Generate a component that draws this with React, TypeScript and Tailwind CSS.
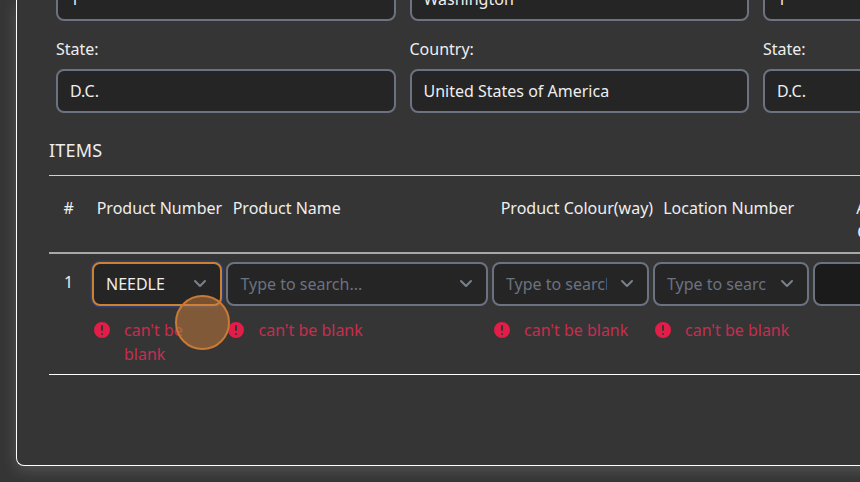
import React from "react";

function Field({ label, value }: { label?: string; value: string }) {
  return (
    <div className="w-[339.5px] shrink-0">
      {label && <div className="mb-2 h-6 leading-6">{label}</div>}
      <div className="flex h-11 items-center rounded-lg border-2 border-[#6b7280] bg-[#252525] px-3">
        {value}
      </div>
    </div>
  );
}

function Chevron() {
  return (
    <svg viewBox="0 0 20 20" className="h-5 w-5 shrink-0 text-[#7b818c]" fill="none" stroke="currentColor" strokeWidth="2" strokeLinecap="round" strokeLinejoin="round">
      <path d="M5 7l5 5 5-5" />
    </svg>
  );
}

function ErrorText() {
  return (
    <div className="mt-3 flex text-[#c52e50]">
      <svg viewBox="0 0 20 20" className="mt-[2px] mr-[12.4px] h-5 w-5 shrink-0">
        <path
          fill="#e11d48"
          fillRule="evenodd"
          d="M18 10a8 8 0 11-16 0 8 8 0 0116 0zm-7 4a1 1 0 11-2 0 1 1 0 012 0zm-1-9a1 1 0 00-1 1v4a1 1 0 102 0V6a1 1 0 00-1-1z"
        />
      </svg>
      <div className="leading-6">can't be blank</div>
    </div>
  );
}

function SearchCell({ width, value, active }: { width: string; value?: string; active?: boolean }) {
  return (
    <div className={`${width} shrink-0`}>
      <div
        className={`flex h-11 items-center rounded-lg border-2 bg-[#252525] pl-[12.4px] pr-[10px] ${
          active ? "border-[#cc8231] shadow-[0_0_0_1.5px_#303e70]" : "border-[#6b7280]"
        }`}
      >
        <div className={`mr-[10px] min-w-0 flex-1 overflow-hidden whitespace-nowrap ${value ? "text-[#eeeeee]" : "text-[#6b7280]"}`}>
          {value ?? "Type to search..."}
        </div>
        <Chevron />
      </div>
      <ErrorText />
    </div>
  );
}

export default function App() {
  return (
    <div className="relative h-[482px] w-[860px] overflow-hidden bg-[#353535] pl-4 font-['Noto_Sans',sans-serif] text-base text-[#eeeeee]">
      <div className="h-[466px] w-[900px] overflow-hidden rounded-bl-lg border-b border-l border-white bg-[#353535] pl-8 shadow-[0_4px_16px_rgba(255,255,255,0.16)]">
        <div className="-mt-[23px] flex gap-[14px] pl-[7px]">
          <Field value="1" />
          <Field value="Washington" />
          <Field value="1" />
        </div>
        <div className="mt-4 flex gap-[14px] pl-[7px]">
          <Field label="State:" value="D.C." />
          <Field label="Country:" value="United States of America" />
          <Field label="State:" value="D.C." />
        </div>
        <h2 className="mt-[23px] h-[39px] text-lg leading-7 tracking-[0.01em]">ITEMS</h2>
        <div className="flex h-[79px] items-start border-t border-b-2 border-t-[#d0d0d0] border-b-[#a8a8a8] pt-5 leading-6 whitespace-nowrap">
          <div className="w-[47.7px] shrink-0 pl-[14.5px]">#</div>
          <div className="w-[136px] shrink-0">Product Number</div>
          <div className="w-[268px] shrink-0">Product Name</div>
          <div className="w-[162.5px] shrink-0">Product Colour(way)</div>
          <div className="w-[180px] shrink-0">Location Number</div>
          <div className="w-[80px] shrink-0 pl-[13px] text-center">
            Available<br />Quantity
          </div>
        </div>
        <div className="flex h-[121px] border-b border-white pt-2">
          <div className="w-[42.6px] shrink-0 pt-2 pl-[15px] leading-6">1</div>
          <div className="flex gap-[4px]">
            <SearchCell width="w-[130.5px]" value="NEEDLE" active />
            <SearchCell width="w-[261.5px]" />
            <SearchCell width="w-[157px]" />
            <SearchCell width="w-[156px]" />
            <div className="h-11 w-[100px] shrink-0 rounded-lg border-2 border-[#6b7280] bg-[#1b1b1b]" />
          </div>
        </div>
      </div>
      <div className="absolute top-[295px] left-[175px] h-[55px] w-[55px] rounded-full border-2 border-[#c87a36] bg-[#cc7f3c]/50" />
    </div>
  );
}
